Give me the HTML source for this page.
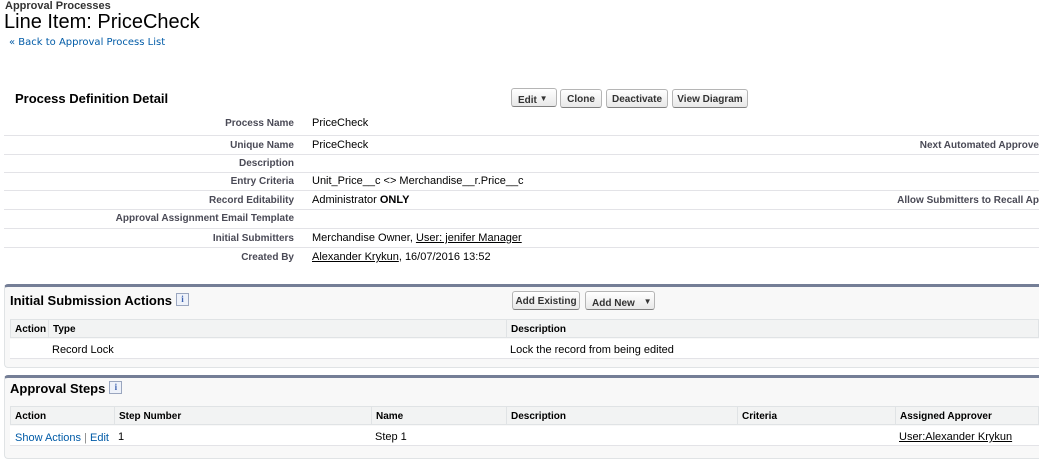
<!DOCTYPE html>
<html><head><meta charset="utf-8"><style>
body{margin:0;width:1039px;height:449px;overflow:hidden;background:#fff;font-family:"Liberation Sans",Arial,sans-serif;font-size:11px;color:#000;position:relative}
.a{position:absolute;white-space:nowrap}
.lbl{position:absolute;right:745px;font-weight:bold;color:#4a4a56;font-size:10px;white-space:nowrap}
.val{position:absolute;left:312px;white-space:nowrap;font-size:11px}
.hl{position:absolute;left:4px;right:0;height:1px;background:#e3e3e7}
.btn{position:absolute;height:19px;border:1px solid #b5b5b5;border-bottom-color:#7f7f7f;border-radius:3px;background:linear-gradient(#fff,#e8e8e8);font-weight:bold;font-size:10px;color:#333;line-height:19px;text-align:center;box-sizing:border-box}
.sec{position:absolute;left:4px;right:0;background:#f8f8f8;border-top:3px solid #747e96;border-left:1px solid #e0e3e5;border-bottom:1px solid #e0e3e5;border-radius:4px 0 0 4px}
.th{position:absolute;background:#f2f3f3;border:1px solid #e0e3e5;height:19px;box-sizing:border-box;font-weight:bold;font-size:10px;line-height:20px;padding-left:4px;color:#000}
.td{position:absolute;background:#fff;height:20px;box-sizing:border-box;border-bottom:1px solid #e3e3e7;font-size:11px;line-height:20px}
u{text-decoration:underline}
.info{display:inline-block;width:11px;height:11px;border:1px solid #9aa6bf;background:#eef2fa;color:#3d62b0;font-size:9px;line-height:11px;text-align:center;font-family:"Liberation Serif",serif;vertical-align:3px;margin-left:4px}
</style></head><body>
<div class="a" style="left:5px;top:0;font-weight:bold;font-size:11px;color:#333">Approval Processes</div>
<div class="a" style="left:4px;top:11px;font-size:20px;color:#000">Line Item: PriceCheck</div>
<div class="a" style="left:9px;top:37px;font-family:'DejaVu Sans',sans-serif;font-size:10px;color:#015ba7">« Back to Approval Process List</div>
<div class="a" style="left:15px;top:91px;font-weight:bold;font-size:13px">Process Definition Detail</div>
<div class="btn" style="left:511px;top:88px;width:46px;text-align:left;padding-left:6px">Edit <span style="font-size:8px;vertical-align:2px">▼</span></div>
<div class="btn" style="left:560px;top:89px;width:42px">Clone</div>
<div class="btn" style="left:606px;top:89px;width:62px">Deactivate</div>
<div class="btn" style="left:672px;top:89px;width:76px">View Diagram</div>

<div class="lbl" style="top:118px">Process Name</div><div class="val" style="top:117px">PriceCheck</div>
<div class="hl" style="top:135px"></div>
<div class="lbl" style="top:140px">Unique Name</div><div class="val" style="top:139px">PriceCheck</div>
<div class="a" style="right:0;top:140px;font-weight:bold;color:#4a4a56;font-size:10px">Next Automated Approve</div>
<div class="hl" style="top:154px"></div>
<div class="lbl" style="top:158px">Description</div>
<div class="hl" style="top:172px"></div>
<div class="lbl" style="top:176px">Entry Criteria</div><div class="val" style="top:175px">Unit_Price__c &lt;&gt; Merchandise__r.Price__c</div>
<div class="hl" style="top:190px"></div>
<div class="lbl" style="top:195px">Record Editability</div><div class="val" style="top:194px">Administrator <b>ONLY</b></div>
<div class="a" style="right:0;top:195px;font-weight:bold;color:#4a4a56;font-size:10px">Allow Submitters to Recall Ap</div>
<div class="hl" style="top:209px"></div>
<div class="lbl" style="top:213px">Approval Assignment Email Template</div>
<div class="hl" style="top:228px"></div>
<div class="lbl" style="top:233px">Initial Submitters</div><div class="val" style="top:232px">Merchandise Owner, <u>User: jenifer Manager</u></div>
<div class="hl" style="top:247px"></div>
<div class="lbl" style="top:252px">Created By</div><div class="val" style="top:251px"><u>Alexander Krykun</u>, 16/07/2016 13:52</div>

<div class="sec" style="top:284px;height:80px"></div>
<div class="a" style="left:10px;top:293px;font-weight:bold;font-size:13px;color:#000">Initial Submission Actions<span class="info">i</span></div>
<div class="btn" style="left:512px;top:291px;width:68px">Add Existing</div>
<div class="btn" style="left:585px;top:291px;width:70px;text-align:left;padding-left:6px">Add New <span style="font-size:8px;vertical-align:2px;margin-left:6px">▼</span></div>
<div class="th" style="left:10px;top:319px;width:39px">Action</div>
<div class="th" style="left:48px;top:319px;width:459px">Type</div>
<div class="th" style="left:506px;top:319px;width:533px">Description</div>
<div class="td" style="left:10px;top:339px;width:1029px"></div>
<div class="a" style="left:52px;top:344px">Record Lock</div>
<div class="a" style="left:510px;top:344px">Lock the record from being edited</div>

<div class="sec" style="top:375px;height:80px"></div>
<div class="a" style="left:10px;top:381px;font-weight:bold;font-size:13px;color:#000">Approval Steps<span class="info">i</span></div>
<div class="th" style="left:10px;top:406px;width:105px">Action</div>
<div class="th" style="left:114px;top:406px;width:258px">Step Number</div>
<div class="th" style="left:371px;top:406px;width:136px">Name</div>
<div class="th" style="left:506px;top:406px;width:232px">Description</div>
<div class="th" style="left:737px;top:406px;width:159px">Criteria</div>
<div class="th" style="left:895px;top:406px;width:144px">Assigned Approver</div>
<div class="td" style="left:10px;top:426px;width:1029px"></div>
<div class="a" style="left:15px;top:432px;color:#015ba7">Show Actions <span style="color:#888">|</span> Edit</div>
<div class="a" style="left:118px;top:431px">1</div>
<div class="a" style="left:375px;top:431px">Step 1</div>
<div class="a" style="left:899px;top:431px"><u>User:Alexander Krykun</u></div>
</body></html>
